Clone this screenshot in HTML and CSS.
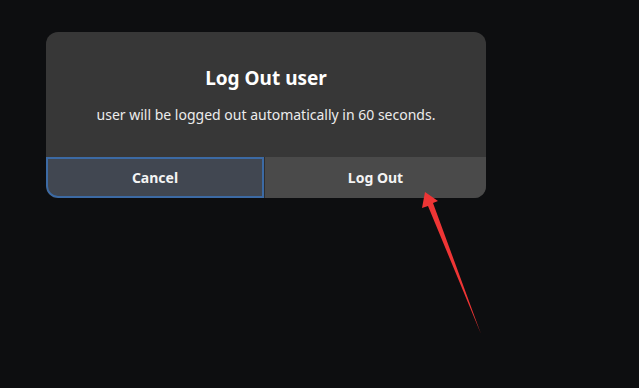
FILE: index.html
```html
<!DOCTYPE html>
<html lang="en">
<head>
<meta charset="utf-8">
<title>Log Out</title>
<link rel="stylesheet" href="styles.css">
</head>
<body>
<div class="dialog">
  <div class="content">
    <h1 class="title">Log Out user</h1>
    <p class="message">user will be logged out automatically in 60 seconds.</p>
  </div>
  <div class="actions">
    <button class="btn btn-cancel">Cancel</button>
    <button class="btn btn-logout">Log Out</button>
  </div>
</div>
<svg class="arrow" width="639" height="388" viewBox="0 0 639 388">
  <polygon points="425,192 438,201 433,203 481,334 428,206 422,208" fill="#ee3535"/>
</svg>
</body>
</html>
```
FILE: styles.css
```css
html, body {
  margin: 0;
  padding: 0;
  background: #0d0e10;
  width: 639px;
  height: 388px;
  overflow: hidden;
}
body {
  font-family: "Noto Sans", "Open Sans", sans-serif;
  position: relative;
}
.dialog {
  margin: 32px 0 0 46px;
  width: 440px;
  height: 166px;
  background: #373737;
  border-radius: 12px;
  display: flex;
  flex-direction: column;
  overflow: hidden;
}
.content {
  flex: 1;
  display: flex;
  flex-direction: column;
  align-items: center;
  justify-content: center;
}
.title {
  margin: 0;
  font-size: 19px;
  line-height: 26px;
  font-weight: 700;
  color: #ffffff;
}
.message {
  margin: 14px 0 0;
  font-size: 14px;
  line-height: 20px;
  color: #ececec;
}
.actions {
  height: 41px;
  display: flex;
  gap: 1px;
  background: #2e2e2e;
}
.btn {
  margin: 0;
  font-family: inherit;
  font-size: 14px;
  font-weight: 700;
  color: #f4f4f4;
  border: none;
  background: #4a4a4a;
  padding: 0;
}
.btn-cancel {
  flex: 0 0 218px;
  background: #414751;
  border: 2px solid #3c6aa4;
  border-bottom-left-radius: 12px;
}
.btn-logout {
  flex: 1;
}
.arrow {
  position: absolute;
  left: 0;
  top: 0;
}
```
